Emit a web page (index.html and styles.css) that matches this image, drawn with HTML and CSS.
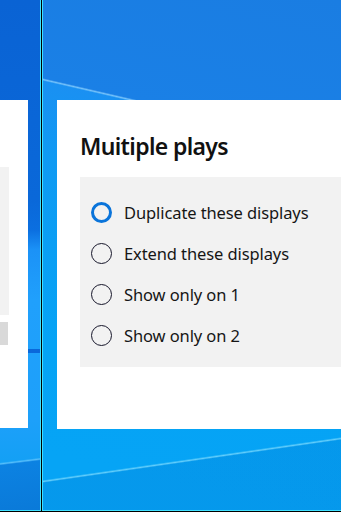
FILE: index.html
```html
<!DOCTYPE html>
<html>
<head>
<meta charset="utf-8">
<link rel="stylesheet" href="styles.css">
</head>
<body>
<div class="desk">
  <div class="display left">
    <div class="win">
      <div class="win-panel"></div>
      <div class="win-btn"></div>
    </div>
  </div>
  <div class="sep"></div>
  <div class="display right">
    <div class="card">
      <h1 class="title">Muitiple plays</h1>
      <div class="options">
        <div class="opt"><span class="radio on"></span><span class="label">Duplicate these displays</span></div>
        <div class="opt"><span class="radio"></span><span class="label">Extend these displays</span></div>
        <div class="opt"><span class="radio"></span><span class="label">Show only on 1</span></div>
        <div class="opt"><span class="radio"></span><span class="label">Show only on 2</span></div>
      </div>
    </div>
  </div>
</div>
</body>
</html>
```

FILE: styles.css
```css
html, body {
  margin: 0;
  padding: 0;
  width: 341px;
  height: 512px;
  overflow: hidden;
  background: #000;
}
.desk {
  display: flex;
  width: 341px;
  height: 511px;
  border-bottom: 1px solid #000;
}
.display {
  height: 510px;
  border-bottom: 1px solid #3fe0ff;
}
.left {
  width: 40px;
  flex: 0 0 40px;
  border-right: 1px solid #3fe0ff;
  padding-top: 100px;
  box-sizing: content-box;
  height: 410px;
  background:
    linear-gradient(180deg, transparent 349px, rgba(5,90,210,0.8) 349px, rgba(5,90,210,0.8) 353px, transparent 353px),
    linear-gradient(173deg, transparent 459px, rgba(140,215,255,0.55) 460.5px, #0c82e2 462px, #0a7ad9 510px),
    linear-gradient(180deg, #0a63d4 0, #0a68d9 200px, #0b6fe0 230px, #1b92f7 250px, #20a0fc 300px, #1da0fa 420px, #14a0f5 460px);
}
.sep {
  width: 1px;
  flex: 0 0 1px;
  background: #000;
  height: 512px;
}
.right {
  flex: 1 1 auto;
  border-left: 1px solid #3fe0ff;
  padding: 100px 0 0 14px;
  height: 410px;
  box-sizing: content-box;
  overflow: hidden;
  background:
    linear-gradient(90deg, rgba(140,235,255,0.9) 0 1px, rgba(120,215,255,0.35) 1px) 265px 329px / 40px 14px no-repeat,
    linear-gradient(193deg, transparent 143px, rgba(150,215,255,0.75) 144.5px, transparent 146px),
    linear-gradient(171.8deg, transparent 475px, rgba(150,230,255,0.65) 476.6px, transparent 478px),
    linear-gradient(171.8deg, transparent 476.6px, rgba(0,70,170,0.12) 477px),
    linear-gradient(193deg, #1a7de2 0, #1a80e6 144px, #1a90f2 145px, #0f9af3 220px, #05a3f5 400px, #06a4f5 510px);
}
.win {
  width: 28px;
  height: 328px;
  background: #fff;
  display: flex;
  flex-direction: column;
  padding-top: 67px;
  box-sizing: border-box;
}
.win-panel {
  width: 9px;
  height: 148px;
  background: #f2f2f2;
}
.win-btn {
  margin-top: 7px;
  width: 8px;
  height: 23px;
  background: #d9d9d9;
}
.card {
  width: 300px;
  height: 329px;
  background: #fff;
  padding: 0 0 0 23px;
  box-sizing: border-box;
  display: flex;
  flex-direction: column;
}
.title {
  margin: 32px 0 0 0;
  font-family: "Noto Sans", "Open Sans", sans-serif;
  font-weight: 600;
  font-size: 23px;
  line-height: 28px;
  color: #111;
  letter-spacing: -0.65px;
}
.options {
  margin-top: 17px;
  background: #f2f2f2;
  height: 190px;
  padding: 25px 0 0 11px;
  box-sizing: border-box;
  display: flex;
  flex-direction: column;
  gap: 21px;
}
.opt {
  display: flex;
  align-items: center;
  height: 20px;
}
.radio {
  width: 21px;
  height: 21px;
  margin-left: -0.5px;
  border-radius: 50%;
  border: 1.7px solid #16162a;
  box-sizing: border-box;
  flex: 0 0 auto;
}
.radio.on {
  border: 3.5px solid #0a74da;
}
.label {
  margin-left: 12.5px;
  font-family: "Noto Sans", "Open Sans", sans-serif;
  font-size: 16.5px;
  color: #161616;
  white-space: nowrap;
  letter-spacing: -0.1px;
}
```
